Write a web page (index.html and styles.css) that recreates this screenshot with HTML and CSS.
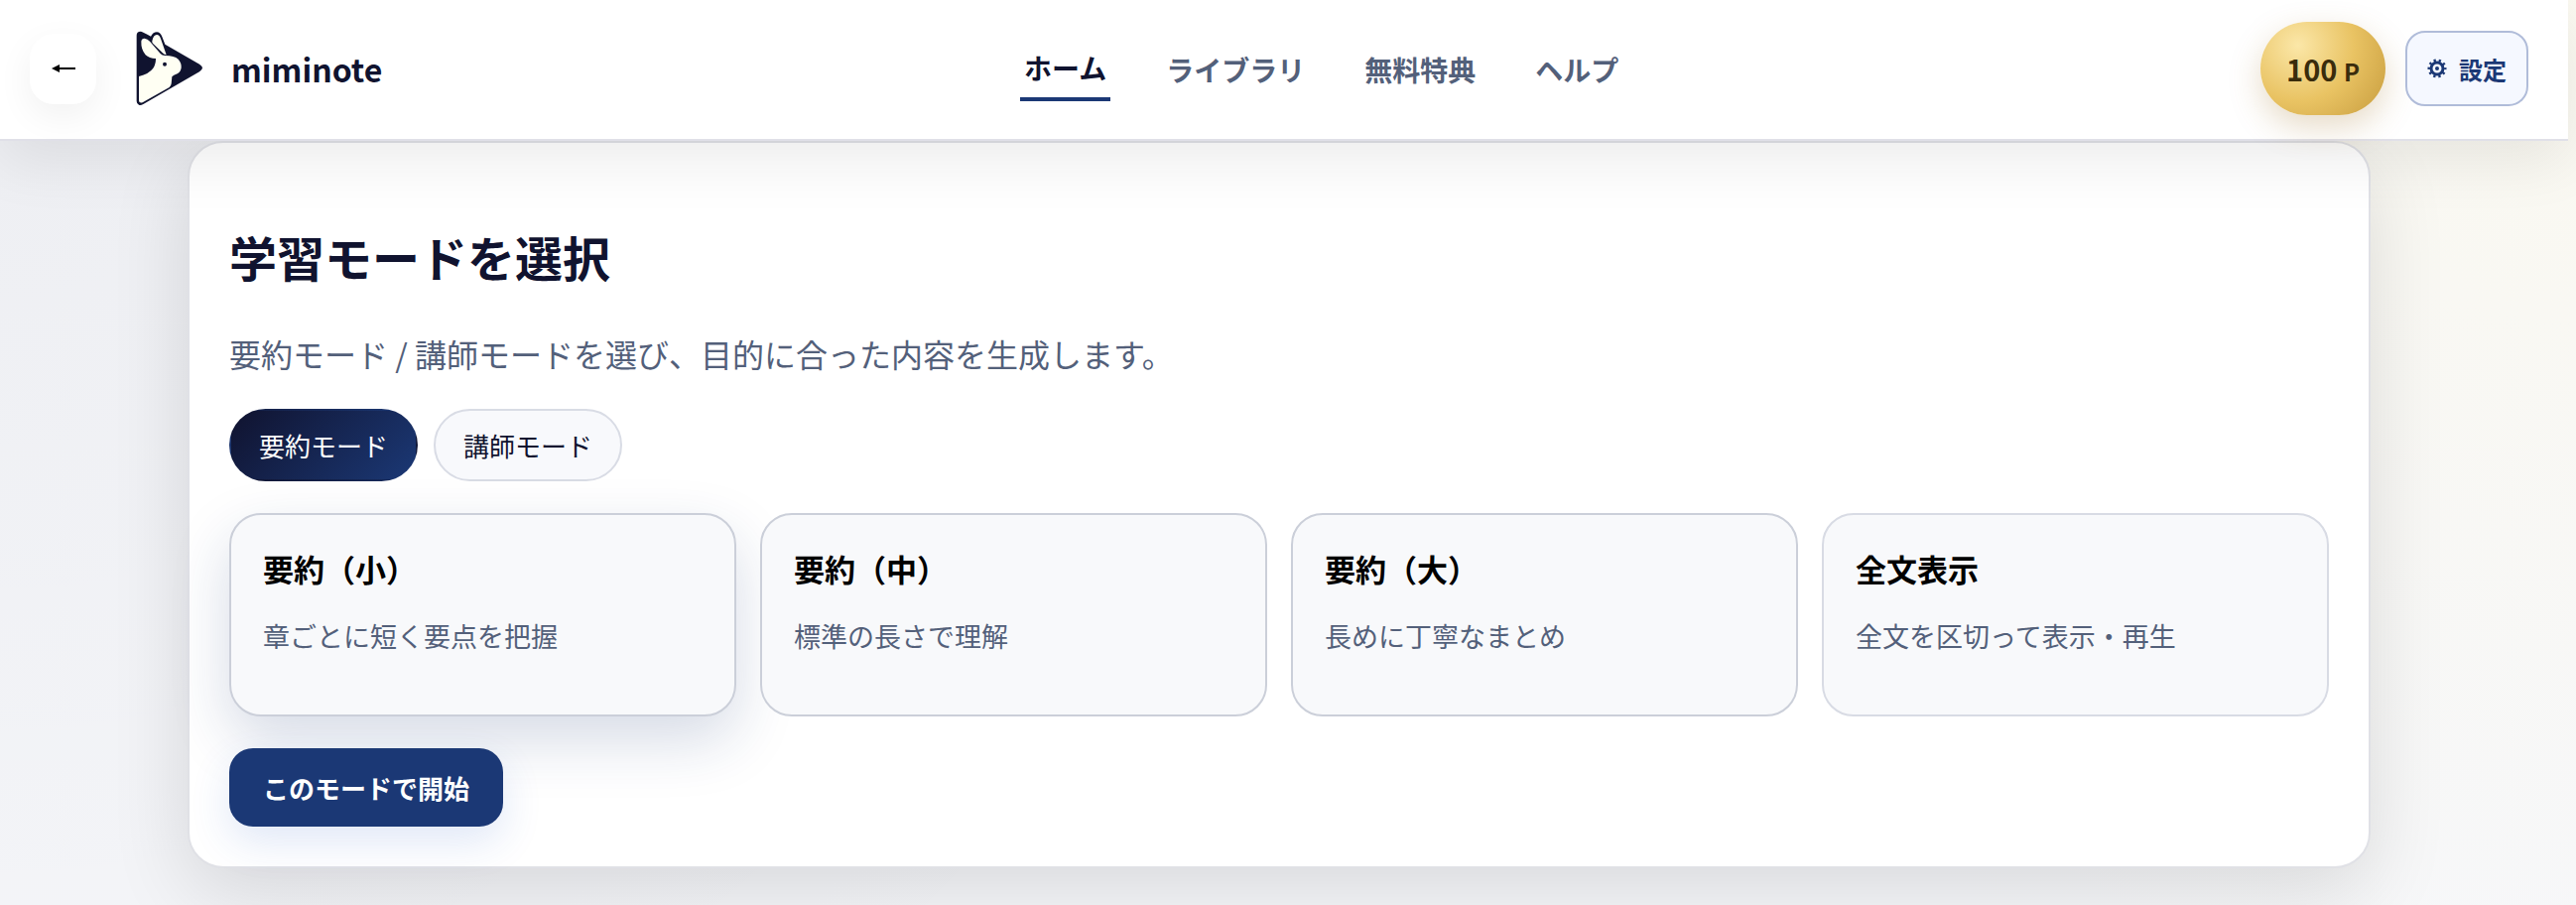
FILE: index.html
```html
<!DOCTYPE html>
<html lang="ja">
<head>
    <meta charset="UTF-8">
    <meta name="viewport" content="width=device-width, initial-scale=1.0">
    <title>miminote</title>
    <link rel="stylesheet" href="styles.css">
</head>
<body>

<header class="site-header">
    <div class="header-left">
        <button type="button" class="back-btn" aria-label="戻る">
            <svg width="24" height="8" viewBox="0 0 24 8" aria-hidden="true">
                <path d="M0 4L8 0V8Z M7 3H24V5H7Z" fill="#000"/>
            </svg>
        </button>
        <a href="#" class="brand">
            <svg class="brand-logo" viewBox="0 0 204 228" aria-hidden="true">
                <path fill="#10132f" d="M2 14Q2 2 14 2Q18 2 45 17Q52 4 63 4Q74 4 79 18L88 41L192 101Q201 107 201 112Q201 118 192 124L22 222Q14 226 9 224Q2 221 2 213Z"/>
                <path fill="#fffff3" d="M49 31Q53 12 63 12Q71 12 75 24L92 73Q86 72 82 68L51 38Q48 35 49 31Z"/>
                <path fill="#fffff3" d="M16 32Q17 23 26 23Q35 24 42 32L74 69Q79 75 88 75Q116 75 128 86Q138 97 137 112Q135 125 125 130Q113 134 109 139L107 160Q106 167 101 171L20 217Q9 220 9 211L9 138Q40 130 52 113Q60 102 60 84Q40 84 29 73Q15 56 16 32Z"/>
                <circle cx="87" cy="101" r="6" fill="#10132f"/>
            </svg>
            <span>miminote</span>
        </a>
    </div>

    <nav class="main-nav">
        <a href="#" class="active">ホーム</a>
        <a href="#">ライブラリ</a>
        <a href="#">無料特典</a>
        <a href="#">ヘルプ</a>
    </nav>

    <div class="header-right">
        <button type="button" class="points">100 <small>P</small></button>
        <button type="button" class="settings">
            <svg width="20" height="20" viewBox="0 0 20 20" aria-hidden="true">
                <circle cx="10" cy="10" r="6" fill="none" stroke="#1b3875" stroke-width="3"/>
                <circle cx="10" cy="10" r="8" fill="none" stroke="#1b3875" stroke-width="3" stroke-dasharray="2.2 2.827" stroke-dashoffset="1.1"/>
                <circle cx="10" cy="10" r="2" fill="#1b3875"/>
            </svg>
            設定
        </button>
    </div>
</header>

<main class="page">
    <section class="panel">
        <h2>学習モードを選択</h2>
        <p class="lead">要約モード / 講師モードを選び、目的に合った内容を生成します。</p>

        <div class="tabs">
            <button type="button" class="tab active">要約モード</button>
            <button type="button" class="tab">講師モード</button>
        </div>

        <div class="modes">
            <button type="button" class="mode selected">
                <strong>要約（小）</strong>
                <span>章ごとに短く要点を把握</span>
            </button>
            <button type="button" class="mode">
                <strong>要約（中）</strong>
                <span>標準の長さで理解</span>
            </button>
            <button type="button" class="mode">
                <strong>要約（大）</strong>
                <span>長めに丁寧なまとめ</span>
            </button>
            <button type="button" class="mode mode-full">
                <strong>全文表示</strong>
                <span>全文を区切って表示・再生</span>
            </button>
        </div>

        <button type="button" class="start-btn">このモードで開始</button>
    </section>
</main>

</body>
</html>
```

FILE: styles.css
```css
* {
    box-sizing: border-box;
}

body {
    margin: 0;
    min-height: 100vh;
    font-family: "Noto Sans CJK JP", sans-serif;
    color: #10132f;
    background:
        radial-gradient(circle at 100% 0, rgba(252, 249, 236, 0.7), transparent 40%),
        radial-gradient(circle at 0 0, rgba(16, 19, 47, 0.04), transparent 50%),
        #f6f7fa;
}

button {
    font-family: inherit;
    cursor: pointer;
}

a {
    text-decoration: none;
}

/* ヘッダー */
.site-header {
    position: relative;
    z-index: 10;
    display: flex;
    justify-content: space-between;
    align-items: center;
    height: 142px;
    margin-right: 8px;
    padding: 0 40px 2px 30px;
    background: #fff;
    border-bottom: 2px solid #e0e0e8;
    box-shadow: 0 20px 60px rgba(0, 0, 0, 0.08);
}

.header-left,
.header-right,
.brand {
    display: flex;
    align-items: center;
}

.header-left {
    gap: 40px;
}

.header-right {
    gap: 20px;
}

.back-btn {
    display: flex;
    align-items: center;
    justify-content: center;
    width: 67px;
    height: 71px;
    border: none;
    border-radius: 24px;
    background: #fff;
    box-shadow: 0 12px 36px rgba(0, 0, 0, 0.06);
}

.brand {
    gap: 28px;
    color: #10132f;
    font-size: 32px;
    font-weight: 700;
}

.brand-logo {
    width: 68px;
    height: 76px;
}

.main-nav {
    display: flex;
    align-items: center;
    gap: 52px;
}

.main-nav a {
    padding: 10px 4px 8px;
    color: #53607a;
    font-size: 28px;
    font-weight: 700;
    line-height: 44px;
}

.main-nav a.active {
    color: #10132f;
    border-bottom: 4px solid #1b3875;
}

.points {
    height: 94px;
    padding: 0 26px;
    border: none;
    border-radius: 47px;
    color: #3a2c0c;
    font-size: 29px;
    font-weight: 700;
    background: radial-gradient(circle at 30% 25%, #fbe7a8, #e9c363 50%, #c79c3e);
    box-shadow: 0 12px 32px rgba(160, 110, 30, 0.25);
}

.points small {
    font-size: 24px;
}

.settings {
    display: flex;
    align-items: center;
    gap: 12px;
    height: 76px;
    padding: 0 20px;
    border: 2px solid #b0bcd9;
    border-radius: 20px;
    color: #1b3875;
    background: #f5f8ff;
    font-size: 24px;
    font-weight: 700;
}

/* モード選択 */
.page {
    padding: 0 18px 36px 0;
}

.panel {
    width: 86%;
    max-width: 2200px;
    margin: 0 auto;
    padding: 40px;
    border: 2px solid #e0e1e6;
    border-radius: 36px;
    background: #fff;
    box-shadow: 0 24px 80px rgba(0, 0, 0, 0.12);
}

.panel h2 {
    margin: 36px 0;
    font-size: 48px;
    line-height: 76px;
}

.lead {
    margin: 0 0 32px;
    color: #53607a;
    font-size: 32px;
    line-height: 48px;
}

.tabs {
    display: flex;
    gap: 16px;
}

.tab {
    padding: 14px 28px;
    border: 2px solid #d9dce5;
    border-radius: 37px;
    color: #10132f;
    background: #f8f9fc;
    font-size: 26px;
    line-height: 41px;
}

.tab.active {
    border-color: transparent;
    color: #fff;
    background: linear-gradient(135deg, #10132f, #1b3875);
}

.modes {
    display: grid;
    grid-template-columns: repeat(4, 1fr);
    gap: 24px;
    margin: 32px 0;
}

.mode {
    display: flex;
    flex-direction: column;
    gap: 20px;
    min-height: 205px;
    padding: 28px 32px;
    border: 2px solid #cbcfd9;
    border-radius: 32px;
    background: #f8f9fb;
    text-align: left;
}

.mode strong {
    color: #000;
    font-size: 31px;
    line-height: 52px;
}

.mode span {
    color: #53607a;
    font-size: 27px;
    line-height: 44px;
}

.mode.selected {
    box-shadow: 0 24px 60px rgba(27, 56, 117, 0.18);
}

.mode-full {
    border-color: #d8dbe4;
}

.start-btn {
    display: block;
    position: relative;
    padding: 19px 34px;
    border: none;
    border-radius: 24px;
    color: #fff;
    background: #1b3875;
    box-shadow: 0 16px 40px rgba(40, 90, 200, 0.14);
    font-size: 26px;
    font-weight: 700;
    line-height: 41px;
}
```
